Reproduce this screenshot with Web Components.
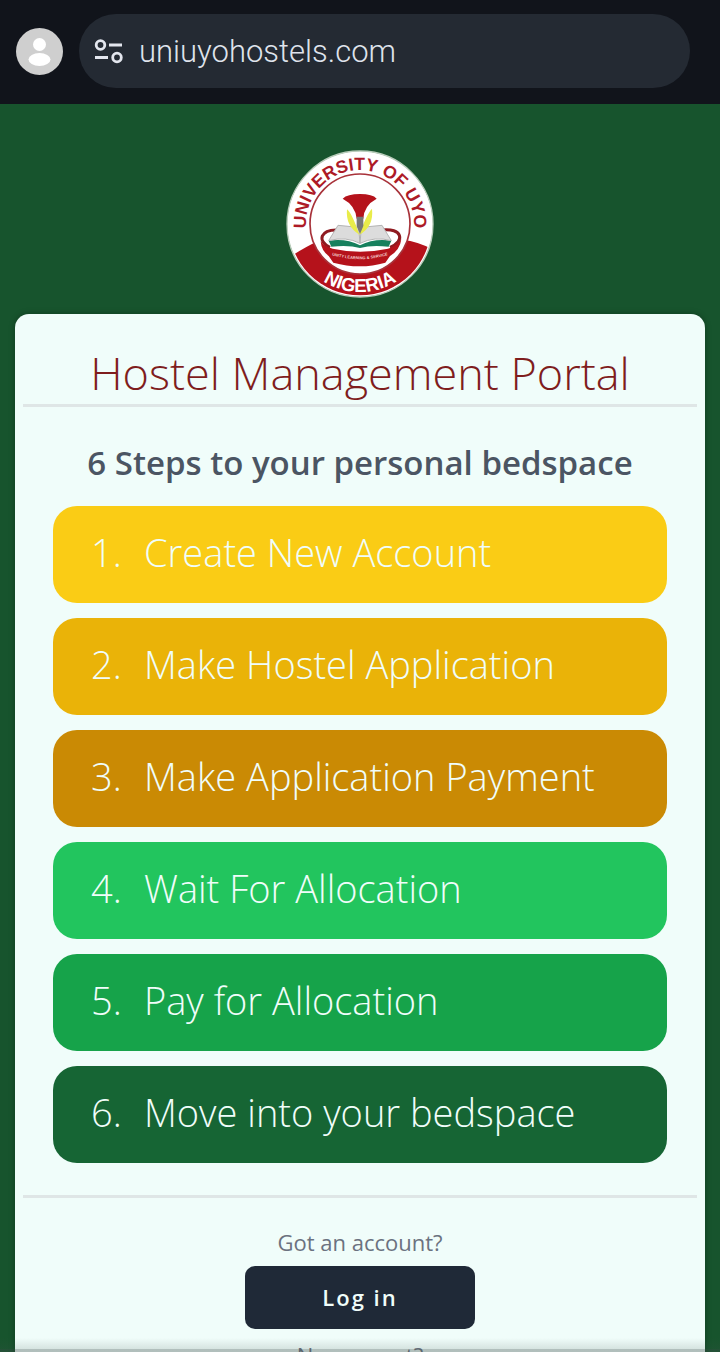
<!DOCTYPE html>
<html lang="en">
<head>
  <meta charset="utf-8">
  <meta name="viewport" content="width=device-width, initial-scale=1">
  <title>Hostel Management Portal</title>
  <style>
    body {
      margin: 0;
      font-family: "Open Sans", "Noto Sans", sans-serif;
      background: #17542d;
    }
  </style>
</head>
<body>
  <portal-app>
    <browser-bar slot="bar" url="uniuyohostels.com"></browser-bar>
    <university-crest slot="logo"></university-crest>
    <portal-card heading="Hostel Management Portal">
      <step-list heading="6 Steps to your personal bedspace">
        <step-item number="1" color="#facc15">Create New Account</step-item>
        <step-item number="2" color="#eab308">Make Hostel Application</step-item>
        <step-item number="3" color="#ca8a04">Make Application Payment</step-item>
        <step-item number="4" color="#22c55e">Wait For Allocation</step-item>
        <step-item number="5" color="#16a34a">Pay for Allocation</step-item>
        <step-item number="6" color="#166534">Move into your bedspace</step-item>
      </step-list>
      <account-prompt slot="footer" action="Log in">Got an account?</account-prompt>
      <account-prompt slot="footer">No account?</account-prompt>
    </portal-card>
  </portal-app>

  <script>
    class PortalApp extends HTMLElement {
      constructor() {
        super();
        this.attachShadow({ mode: 'open' });
        this.shadowRoot.innerHTML = `
          <style>
            :host {
              display: flex;
              flex-direction: column;
              position: relative;
              height: 100vh;
              overflow: hidden;
            }
            main {
              flex: 1;
              display: flex;
              flex-direction: column;
              gap: 16px;
              padding: 46px 15px 0;
              min-height: 0;
            }
            .logo {
              display: flex;
              justify-content: center;
            }
            .edge {
              position: absolute;
              left: 0;
              right: 0;
              bottom: 0;
              height: 14px;
              background: linear-gradient(transparent, rgba(60, 80, 75, 0.15) 11px, rgba(60, 75, 72, 0.35) 11px);
            }
          </style>
          <slot name="bar"></slot>
          <main>
            <div class="logo"><slot name="logo"></slot></div>
            <slot></slot>
          </main>
          <div class="edge"></div>
        `;
      }
    }

    class BrowserBar extends HTMLElement {
      connectedCallback() {
        this.attachShadow({ mode: 'open' });
        this.shadowRoot.innerHTML = `
          <style>
            :host {
              display: flex;
              flex: none;
              align-items: center;
              gap: 16px;
              padding: 14px 30px 16px 16px;
              background: #11141b;
            }
            .avatar {
              flex: none;
              width: 47px;
              height: 47px;
            }
            .address {
              flex: 1;
              display: flex;
              align-items: center;
              gap: 15px;
              height: 74px;
              padding: 0 15px;
              border-radius: 37px;
              background: #242a33;
              color: #dfe3ec;
              font: 300 31px "Roboto", sans-serif;
            }
          </style>
          <svg class="avatar" viewBox="0 0 47 47" aria-hidden="true">
            <circle cx="23.5" cy="23.5" r="23.5" fill="#cfcfcf"/>
            <circle cx="23.5" cy="16.5" r="6.5" fill="#fff"/>
            <ellipse cx="23.5" cy="31.5" rx="11" ry="6.5" fill="#fff"/>
          </svg>
          <div class="address">
            <svg width="30" height="28" viewBox="0 0 30 28" fill="none" stroke="#e3e6ee" stroke-width="2.8" aria-hidden="true">
              <circle cx="6.5" cy="8" r="4.3"/>
              <path d="M15 8h13M1 20.500h13"/>
              <circle cx="23" cy="20.5" r="4.3"/>
            </svg>
            <span>${this.getAttribute('url')}</span>
          </div>
        `;
      }
    }

    class UniversityCrest extends HTMLElement {
      constructor() {
        super();
        this.attachShadow({ mode: 'open' });
        this.shadowRoot.innerHTML = `
          <style>
            :host {
              display: block;
              width: 148px;
              height: 148px;
            }
            svg {
              display: block;
              width: 100%;
              height: 100%;
            }
            text {
              font-family: "Liberation Sans", sans-serif;
              font-weight: bold;
              text-anchor: middle;
            }
          </style>
          <svg viewBox="20 30 444 444" role="img" aria-label="University of Uyo crest">
            <defs>
              <path id="top" d="M84 288A162 162 0 1 1 400 288"/>
              <path id="bottom" d="M38 252A204 204 0 0 0 446 252"/>
              <path id="motto" d="M150 343Q242 372 334 343"/>
              <clipPath id="disc"><circle cx="242" cy="252" r="214"/></clipPath>
            </defs>
            <circle cx="242" cy="252" r="219" fill="#fff" stroke="#b9cdbb" stroke-width="4"/>
            <path clip-path="url(#disc)" fill="#b5121b" d="M20 358Q75 322 122 300H372Q420 305 470 334V480H20z"/>
            <circle cx="242" cy="252" r="150" fill="#fff" stroke="#a8323a" stroke-width="5"/>
            <!-- bowl -->
            <path fill="none" stroke="#8f1a20" stroke-width="9" d="M180 270C122 266 112 304 152 322M306 270C370 262 378 304 332 322"/>
            <path fill="#b5121b" d="M124 304Q138 322 160 326Q242 344 326 326Q350 320 366 298Q362 330 332 348L318 368Q242 390 162 368L148 348Q126 332 124 304z"/>
            <!-- book -->
            <path fill="#16805d" d="M148 302Q200 294 242 316Q284 294 336 302L328 320Q276 314 242 324Q208 314 156 320z"/>
            <path fill="#dcdcdc" stroke="#b4b4b4" stroke-width="3" d="M176 256L238 262L242 310Q200 288 148 302zM308 256L246 262L242 310Q286 288 336 302z"/>
            <!-- torch -->
            <path fill="#e9ec4a" d="M203 208Q218 220 240 284Q198 258 203 208zM278 206Q262 222 240 284Q284 260 278 206z"/>
            <path fill="#b5121b" d="M190 176Q204 162 242 162Q280 162 292 176Q254 196 252 236H232Q228 196 190 176z"/>
            <path fill="#777" d="M232 230h20v28l-10 24l-10-24z"/>
            <text font-size="53" fill="#ad1a26"><textPath href="#top" startOffset="50%">UNIVERSITY OF UYO</textPath></text>
            <text font-size="56" fill="#fff"><textPath href="#bottom" startOffset="50%">NIGERIA</textPath></text>
            <text font-size="12" fill="#f4d0d0"><textPath href="#motto" startOffset="50%">UNITY LEARNING &amp; SERVICE</textPath></text>
          </svg>
        `;
      }
    }

    class PortalCard extends HTMLElement {
      connectedCallback() {
        this.attachShadow({ mode: 'open' });
        this.shadowRoot.innerHTML = `
          <style>
            :host {
              display: block;
              padding: 28px 8px 0;
              border-radius: 14px 14px 0 0;
              background: #f0fdfa;
              box-shadow: 0 0 6px rgba(0, 0, 0, 0.3);
            }
            h1 {
              margin: 0;
              color: #7f1d1d;
              font-size: 45px;
              font-weight: 300;
              line-height: 62px;
              text-align: center;
              white-space: nowrap;
            }
            hr {
              margin: 0;
              border: 0;
              height: 3px;
              background: #dfe6e6;
            }
            footer {
              display: flex;
              flex-direction: column;
              align-items: center;
              gap: 10px;
              padding-top: 28px;
            }
          </style>
          <h1>${this.getAttribute('heading')}</h1>
          <hr>
          <slot></slot>
          <hr>
          <footer><slot name="footer"></slot></footer>
        `;
      }
    }

    class StepList extends HTMLElement {
      connectedCallback() {
        this.attachShadow({ mode: 'open' });
        this.shadowRoot.innerHTML = `
          <style>
            :host {
              display: block;
              padding: 32px 30px;
            }
            h2 {
              margin: 0 0 19px;
              color: #4b5563;
              font-size: 33px;
              font-weight: 600;
              line-height: 48px;
              text-align: center;
              white-space: nowrap;
            }
            .steps {
              display: flex;
              flex-direction: column;
              gap: 15px;
            }
          </style>
          <h2>${this.getAttribute('heading')}</h2>
          <div class="steps" role="list"><slot></slot></div>
        `;
      }
    }

    class StepItem extends HTMLElement {
      connectedCallback() {
        this.setAttribute('role', 'listitem');
        this.attachShadow({ mode: 'open' });
        this.shadowRoot.innerHTML = `
          <style>
            :host {
              display: grid;
              grid-template-columns: 53px 1fr;
              padding: 18px 38px 22px;
              border-radius: 24px;
              background: ${this.getAttribute('color')};
              color: #f0fdfa;
              font-size: 38px;
              font-weight: 300;
              line-height: 57px;
              white-space: nowrap;
            }
          </style>
          <span>${this.getAttribute('number')}.</span>
          <span><slot></slot></span>
        `;
      }
    }

    class AccountPrompt extends HTMLElement {
      connectedCallback() {
        const action = this.getAttribute('action');

        this.attachShadow({ mode: 'open' });
        this.shadowRoot.innerHTML = `
          <style>
            :host {
              display: flex;
              flex-direction: column;
              align-items: center;
              gap: 8px;
            }
            p {
              margin: 0;
              color: #6b7280;
              font-size: 22px;
              line-height: 32px;
            }
            button {
              min-width: 230px;
              padding: 16px 32px;
              border: 0;
              border-radius: 10px;
              background: #1f2937;
              color: #f0fdfa;
              font: 600 22px/31px "Open Sans", "Noto Sans", sans-serif;
              letter-spacing: 2px;
            }
          </style>
          <p><slot></slot></p>
          ${action ? `<button type="button">${action}</button>` : ''}
        `;
      }
    }

    customElements.define('portal-app', PortalApp);
    customElements.define('browser-bar', BrowserBar);
    customElements.define('university-crest', UniversityCrest);
    customElements.define('portal-card', PortalCard);
    customElements.define('step-list', StepList);
    customElements.define('step-item', StepItem);
    customElements.define('account-prompt', AccountPrompt);
  </script>
</body>
</html>
